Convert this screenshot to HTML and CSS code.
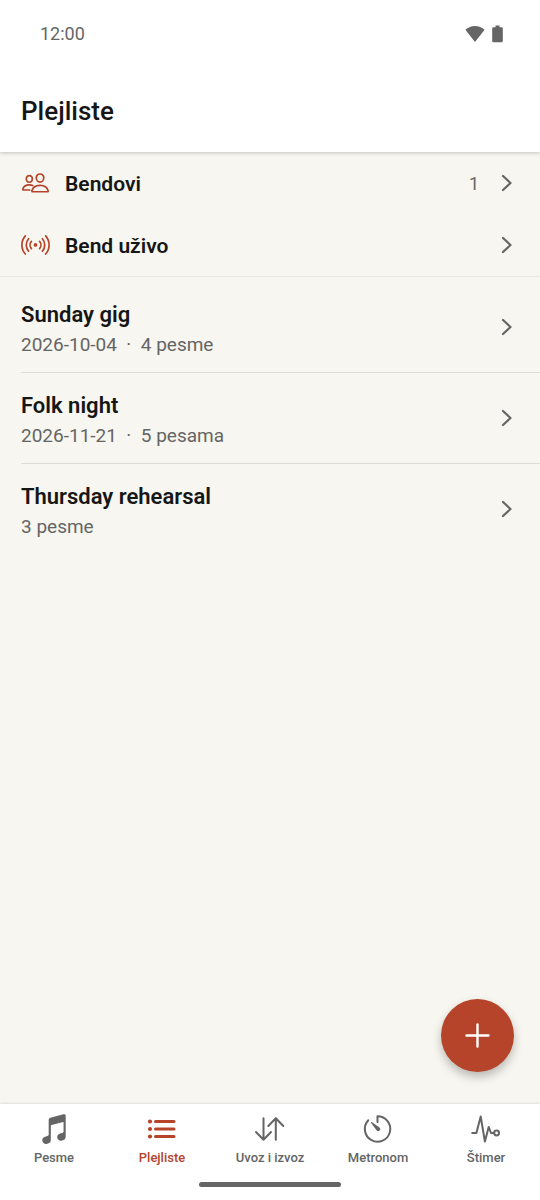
FILE: index.html
```html
<!DOCTYPE html>
<html lang="sr-Latn">
<head>
<meta charset="utf-8">
<meta name="viewport" content="width=device-width, initial-scale=1">
<title>Plejliste</title>
<link rel="stylesheet" href="styles.css">
</head>
<body>
<div class="app">
  <header class="top">
    <div class="status">
      <span class="clock">12:00</span>
      <span class="status-icons">
        <svg width="20" height="18" viewBox="0 0 20 18" fill="currentColor" aria-hidden="true"><path d="M.4 4.700C3 2.200 6.300.9 10 .9s7 1.300 9.600 3.800L10 17z"/></svg>
        <svg width="11" height="18" viewBox="0 0 11 18" fill="currentColor" aria-hidden="true"><path d="M3.500.5h4v1.800H9.600q1.200 0 1.200 1.200v12.500q0 1.200-1.200 1.200H1.400Q.2 17.200.2 16V3.500q0-1.200 1.200-1.200h2.100z"/></svg>
      </span>
    </div>
    <h1 class="title">Plejliste</h1>
  </header>

  <main class="content">
    <nav class="links" aria-label="Bendovi">
      <a class="link" href="#bendovi">
        <svg class="link-icon" viewBox="0 0 512 512" aria-hidden="true"><path d="M402 160c-2.930 40.670-33.100 72-66 72s-63.120-31.320-66-72c-3-42.310 26.370-72 66-72s69 30.460 66 72z"/><path d="M336 290c-65.170 0-127.840 32.370-143.540 95.410-2.080 8.340 3.150 16.590 11.720 16.590h263.650c8.570 0 13.770-8.250 11.720-16.590C463.850 321.360 401.180 290 336 290z"/><path d="M200 175.940c-2.340 32.480-26.720 58.060-53 58.060s-50.700-25.570-53-58.060C91.610 142.150 115.340 118 147 118s55.390 24.770 53 57.940z"/><path d="M206 293c-18.050-8.270-37.930-11.450-59-11.450-52 0-102.100 25.850-114.650 76.200-1.650 6.660 2.530 13.250 9.370 13.250H154"/></svg>
        <span class="link-label">Bendovi</span>
        <span class="count">1</span>
        <svg class="chevron" viewBox="0 0 12 18" aria-hidden="true"><path d="M2 2l7.500 7L2 16"/></svg>
      </a>
      <a class="link" href="#uzivo">
        <svg class="link-icon" viewBox="0 0 512 512" aria-hidden="true"><circle cx="256" cy="246" r="18" fill="currentColor"/><path d="M184 182a96 96 0 0 0 0 128M328 310a96 96 0 0 0 0-128M134 136a168 168 0 0 0 0 220M378 356a168 168 0 0 0 0-220M435 406a240 240 0 0 0 0-320M77 86a240 240 0 0 0 0 320"/></svg>
        <span class="link-label">Bend uživo</span>
        <svg class="chevron" viewBox="0 0 12 18" aria-hidden="true"><path d="M2 2l7.500 7L2 16"/></svg>
      </a>
    </nav>

    <ul class="playlists">
      <li><a class="playlist" href="#sunday-gig">
        <span class="info"><span class="name">Sunday gig</span><span class="meta">2026-10-04 &nbsp;·&nbsp; 4 pesme</span></span>
        <svg class="chevron" viewBox="0 0 12 18" aria-hidden="true"><path d="M2 2l7.500 7L2 16"/></svg>
      </a></li>
      <li><a class="playlist" href="#folk-night">
        <span class="info"><span class="name">Folk night</span><span class="meta">2026-11-21 &nbsp;·&nbsp; 5 pesama</span></span>
        <svg class="chevron" viewBox="0 0 12 18" aria-hidden="true"><path d="M2 2l7.500 7L2 16"/></svg>
      </a></li>
      <li><a class="playlist" href="#thursday-rehearsal">
        <span class="info"><span class="name">Thursday rehearsal</span><span class="meta">3 pesme</span></span>
        <svg class="chevron" viewBox="0 0 12 18" aria-hidden="true"><path d="M2 2l7.500 7L2 16"/></svg>
      </a></li>
    </ul>

    <button class="fab" type="button" aria-label="Nova plejlista">
      <svg width="25" height="25" viewBox="0 0 25 25" aria-hidden="true"><path d="M12.500 1.500v22M1.500 12.500h22"/></svg>
    </button>
  </main>

  <footer class="bottom">
    <nav class="tabs" aria-label="Glavni meni">
      <a class="tab" href="#pesme">
        <svg viewBox="0 0 512 512" aria-hidden="true"><path fill="currentColor" stroke="none" d="M421.840 37.370a25.860 25.860 0 0 0-22.600-4.460L199.920 86.490A32.300 32.300 0 0 0 176 118v226c0 6.740-4.360 12.560-11.110 14.830l-.12.05-52 18C92.880 383.530 80 402 80 423.910a55.540 55.540 0 0 0 23.230 45.630A54.780 54.780 0 0 0 135.340 480a55.820 55.820 0 0 0 17.750-2.930l.38-.13 21.840-7.940A47.840 47.840 0 0 0 208 423.910v-212c0-7.290 4.770-13.210 12.160-15.070l.21-.06L395 150.140a4 4 0 0 1 5 3.860v141.930c0 6.750-4.250 12.380-11.080 14.680l-.25.09-50.890 18.110A49.090 49.090 0 0 0 304 375.920a55.670 55.670 0 0 0 23.230 45.800 54.630 54.630 0 0 0 49.880 7.350l.36-.12 21.840-7.950A47.830 47.830 0 0 0 432 375.920V58a25.740 25.740 0 0 0-10.160-20.630z"/></svg>
        <span>Pesme</span>
      </a>
      <a class="tab tab-active" href="#plejliste" aria-current="page">
        <svg viewBox="0 0 34 34" aria-hidden="true"><path stroke-width="3" d="M10.500 9.500H29M10.500 17H29M10.500 24.500H29"/><g fill="currentColor" stroke="none"><circle cx="5" cy="9.500" r="2.100"/><circle cx="5" cy="17" r="2.100"/><circle cx="5" cy="24.500" r="2.100"/></g></svg>
        <span>Plejliste</span>
      </a>
      <a class="tab" href="#uvoz-izvoz">
        <svg viewBox="0 0 34 34" aria-hidden="true"><path d="M10.500 6.200v21.500M3 20l7.500 7.700L18 20M22.800 27.700V6.200M15.300 14l7.500-7.800 7.500 7.800"/></svg>
        <span>Uvoz i izvoz</span>
      </a>
      <a class="tab" href="#metronom">
        <svg viewBox="0 0 34 34" aria-hidden="true"><path d="M16.500 10V4.300A12.700 12.700 0 1 1 7.300 8.300"/><path fill="currentColor" stroke="none" d="M10.700 10.100l7.800 5.300a2.100 2.100 0 1 1-3 2.900L10 10.800a.5.5 0 0 1 .7-.7z"/></svg>
        <span>Metronom</span>
      </a>
      <a class="tab" href="#stimer">
        <svg viewBox="0 0 34 34" aria-hidden="true"><path d="M3.200 21h4.200l4.300-16.500 4.200 25 3.800-14.500 2.300 6h3"/><circle cx="27.600" cy="21" r="2.400"/></svg>
        <span>Štimer</span>
      </a>
    </nav>
    <div class="home-bar"></div>
  </footer>
</div>
</body>
</html>
```
FILE: styles.css
```css
* {
  box-sizing: border-box;
}

:root {
  --accent: #b5442a;
  --ink: #161616;
  --muted: #656565;
  --paper: #f7f6f0;
  --line: #dddcd7;
}

body {
  margin: 0;
  background: var(--paper);
  color: var(--ink);
  font-family: Roboto, "Liberation Sans", sans-serif;
}

a {
  color: inherit;
  text-decoration: none;
}

svg {
  display: block;
  flex: none;
}

.app {
  display: flex;
  flex-direction: column;
  min-height: 100vh;
}

.top {
  position: relative;
  background: #fff;
  box-shadow: 0 1px 4px rgba(0, 0, 0, 0.22);
}

.status {
  display: flex;
  justify-content: space-between;
  align-items: center;
  height: 68px;
  padding: 0 37px 0 40px;
  color: var(--muted);
  font-size: 18px;
}

.clock {
  padding-bottom: 2px;
}

.status-icons {
  display: flex;
  gap: 7px;
}

.title {
  margin: 0;
  padding: 27px 21px 25px;
  font-size: 26px;
  line-height: 32px;
  font-weight: 500;
}

.content {
  position: relative;
  flex: 1;
}

.links {
  border-bottom: 1px solid #e9e8e3;
}

.link {
  display: flex;
  align-items: center;
  height: 62px;
  padding: 0 27px 0 21px;
}

.link-icon {
  width: 29px;
  height: 29px;
  margin-right: 15px;
  color: var(--accent);
  fill: none;
  stroke: currentColor;
  stroke-width: 30;
  stroke-linecap: round;
  stroke-linejoin: round;
}

.link-label {
  flex: 1;
  padding-top: 2px;
  font-size: 21px;
  line-height: 26px;
  font-weight: 600;
}

.count {
  margin-right: 22px;
  color: var(--muted);
  font-size: 18px;
}

.chevron {
  width: 12px;
  height: 18px;
  fill: none;
  stroke: var(--muted);
  stroke-width: 2.2;
  stroke-linecap: round;
  stroke-linejoin: round;
}

.playlists {
  margin: 0;
  padding: 5px 0 0 21px;
  list-style: none;
}

.playlists li + li {
  border-top: 1px solid var(--line);
}

.playlist {
  display: flex;
  align-items: center;
  justify-content: space-between;
  padding-right: 27px;
}

.info {
  display: flex;
  flex-direction: column;
  gap: 3px;
  padding: 18px 0 15px;
}

.name {
  font-size: 22px;
  line-height: 30px;
  font-weight: 600;
}

.meta {
  color: var(--muted);
  font-size: 19px;
  line-height: 24px;
}

.fab {
  position: absolute;
  right: 26px;
  bottom: 32px;
  display: grid;
  place-items: center;
  width: 73px;
  height: 73px;
  padding: 0;
  border: 0;
  border-radius: 50%;
  background: var(--accent);
  box-shadow: 0 5px 10px rgba(0, 0, 0, 0.25);
}

.fab svg {
  fill: none;
  stroke: #fff;
  stroke-width: 2.4;
  stroke-linecap: round;
}

.bottom {
  position: relative;
  background: #fff;
  box-shadow: 0 0 3px rgba(0, 0, 0, 0.18);
}

.tabs {
  display: grid;
  grid-template-columns: repeat(5, 1fr);
  padding: 8px 0 15px;
}

.tab {
  display: flex;
  flex-direction: column;
  align-items: center;
  gap: 3px;
  color: var(--muted);
  font-size: 13px;
  line-height: 18px;
  font-weight: 500;
}

.tab svg {
  width: 34px;
  height: 34px;
  fill: none;
  stroke: currentColor;
  stroke-width: 2;
  stroke-linecap: round;
  stroke-linejoin: round;
}

.tab-active {
  color: var(--accent);
}

.home-bar {
  width: 142px;
  height: 5px;
  margin: 0 auto 13px;
  border-radius: 3px;
  background: var(--muted);
}
```
